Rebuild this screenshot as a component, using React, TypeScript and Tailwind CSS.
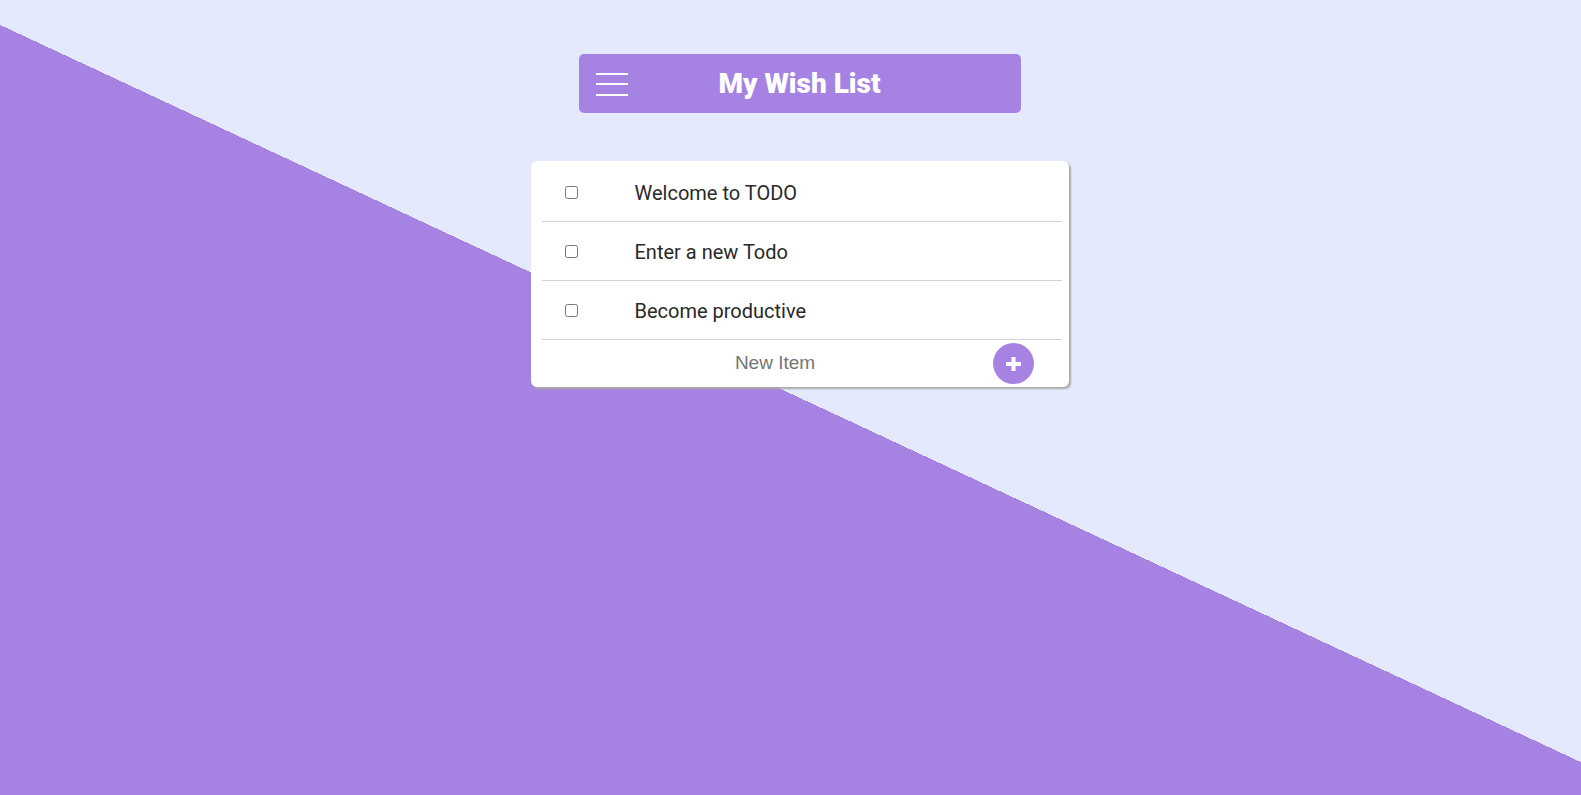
import { useState } from "react";
import type { FormEvent } from "react";

const startItems = ["Welcome to TODO", "Enter a new Todo", "Become productive"];

function MenuIcon() {
  return (
    <svg width="32" height="23" viewBox="0 0 32 23" fill="#fff" aria-hidden="true">
      <rect y="0" width="32" height="2" />
      <rect y="10" width="32" height="2" />
      <rect y="21" width="32" height="2" />
    </svg>
  );
}

function PlusIcon() {
  return (
    <svg width="15" height="14" viewBox="0 0 15 14" fill="#fff" aria-hidden="true">
      <path d="M5.500 0h4v5H15v4H9.500v5h-4V9H0V5h5.500z" />
    </svg>
  );
}

function Item({ label, id }: { label: string; id: string }) {
  return (
    <li className="flex h-[59px] items-center border-b border-[#d3d3d3] pl-[23px]">
      <input id={id} type="checkbox" className="peer h-[13px] w-[13px] shrink-0" />
      <label htmlFor={id} className="ml-[57px] pt-0.5 text-xl text-[#292929] peer-checked:line-through">
        {label}
      </label>
    </li>
  );
}

export default function App() {
  const [items, setItems] = useState(startItems);
  const [text, setText] = useState("");

  const add = (event: FormEvent) => {
    event.preventDefault();
    if (text.trim()) {
      setItems([...items, text.trim()]);
      setText("");
    }
  };

  return (
    <div className="flex min-h-screen flex-col items-center bg-[linear-gradient(205deg,#e4e9fd_49.74%,#a683e3_49.74%)] pt-[54px] pl-[18px] font-['Roboto',sans-serif]">
      <header className="grid h-[59px] w-full max-w-[442px] grid-cols-[1fr_auto_1fr] items-center rounded-[5px] bg-[#a683e3] px-[17px]">
        <button type="button" aria-label="Menu" className="justify-self-start pt-px">
          <MenuIcon />
        </button>
        <h1 className="text-[28px] leading-8 font-black text-white">My Wish List</h1>
      </header>

      <main className="mt-12 w-full max-w-[538px] rounded-md bg-white pt-0.5 pr-[7px] pl-[11px] shadow-[2px_2px_2px_#aaa]">
        <ul>
          {items.map((label, index) => (
            <Item key={index} id={`item-${index}`} label={label} />
          ))}
        </ul>
        <form onSubmit={add} className="flex h-[47px] items-center pr-7">
          <input
            type="text"
            aria-label="New Item"
            placeholder="New Item"
            autoComplete="off"
            value={text}
            onChange={(event) => setText(event.target.value)}
            className="min-w-0 flex-1 bg-transparent pl-4 text-center font-['Liberation_Sans',Arial,sans-serif] text-[19px] text-[#292929] outline-none placeholder:text-[#757575]"
          />
          <button
            type="submit"
            aria-label="Add item"
            className="flex h-[41px] w-[41px] shrink-0 items-center justify-center rounded-full bg-[#a683e3]"
          >
            <PlusIcon />
          </button>
        </form>
      </main>
    </div>
  );
}
